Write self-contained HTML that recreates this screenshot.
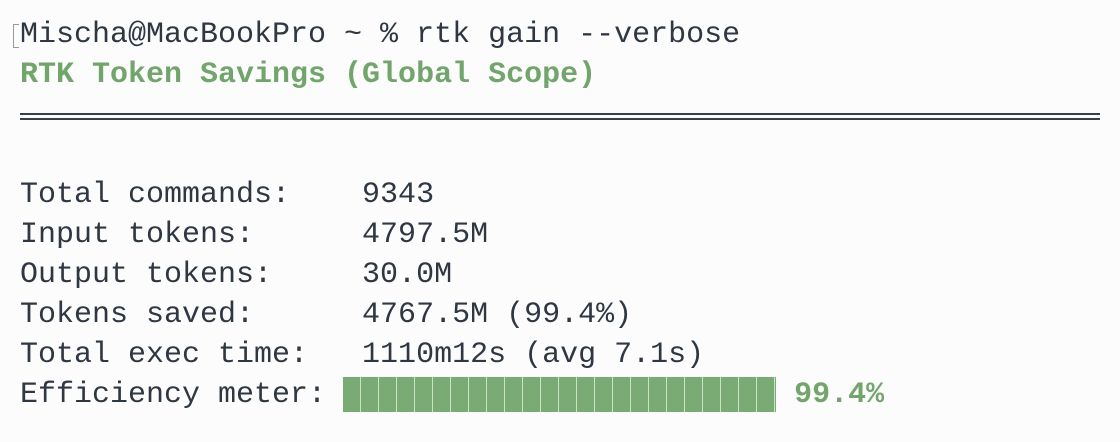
<!DOCTYPE html>
<html><head><style>
html,body{margin:0;padding:0;width:1120px;height:442px;background:#fcfcfc;overflow:hidden}
.l{position:absolute;left:20px;height:40px;line-height:40px;font-family:"Liberation Mono",monospace;font-size:30px;color:#2f3742;white-space:pre;letter-spacing:0}
.g{color:#72a56c;font-weight:bold}
.sep{position:absolute;left:20px;width:1080px;height:2px;background:#3a3f47}
.bar{position:absolute;left:343px;top:377px;width:433px;height:35px;background:#7aab74;
background-image:repeating-linear-gradient(90deg,transparent 0,transparent 17px,#c9e4c3 17px,#c9e4c3 18px)}
.cur{position:absolute;left:13px;top:24px;width:5px;height:22px;border:1px solid #999;border-right:none}
</style></head><body>
<div class="cur"></div>
<div class="l" style="top:15px">Mischa@MacBookPro ~ % rtk gain --verbose</div>
<div class="l g" style="top:55px">RTK Token Savings (Global Scope)</div>
<div class="sep" style="top:113px"></div>
<div class="sep" style="top:118px"></div>
<div class="l" style="top:175px">Total commands:    9343</div>
<div class="l" style="top:215px">Input tokens:      4797.5M</div>
<div class="l" style="top:255px">Output tokens:     30.0M</div>
<div class="l" style="top:295px">Tokens saved:      4767.5M (99.4%)</div>
<div class="l" style="top:335px">Total exec time:   1110m12s (avg 7.1s)</div>
<div class="l" style="top:375px">Efficiency meter:                          <span class="g">99.4%</span></div>
<div class="bar"></div>
</body></html>
